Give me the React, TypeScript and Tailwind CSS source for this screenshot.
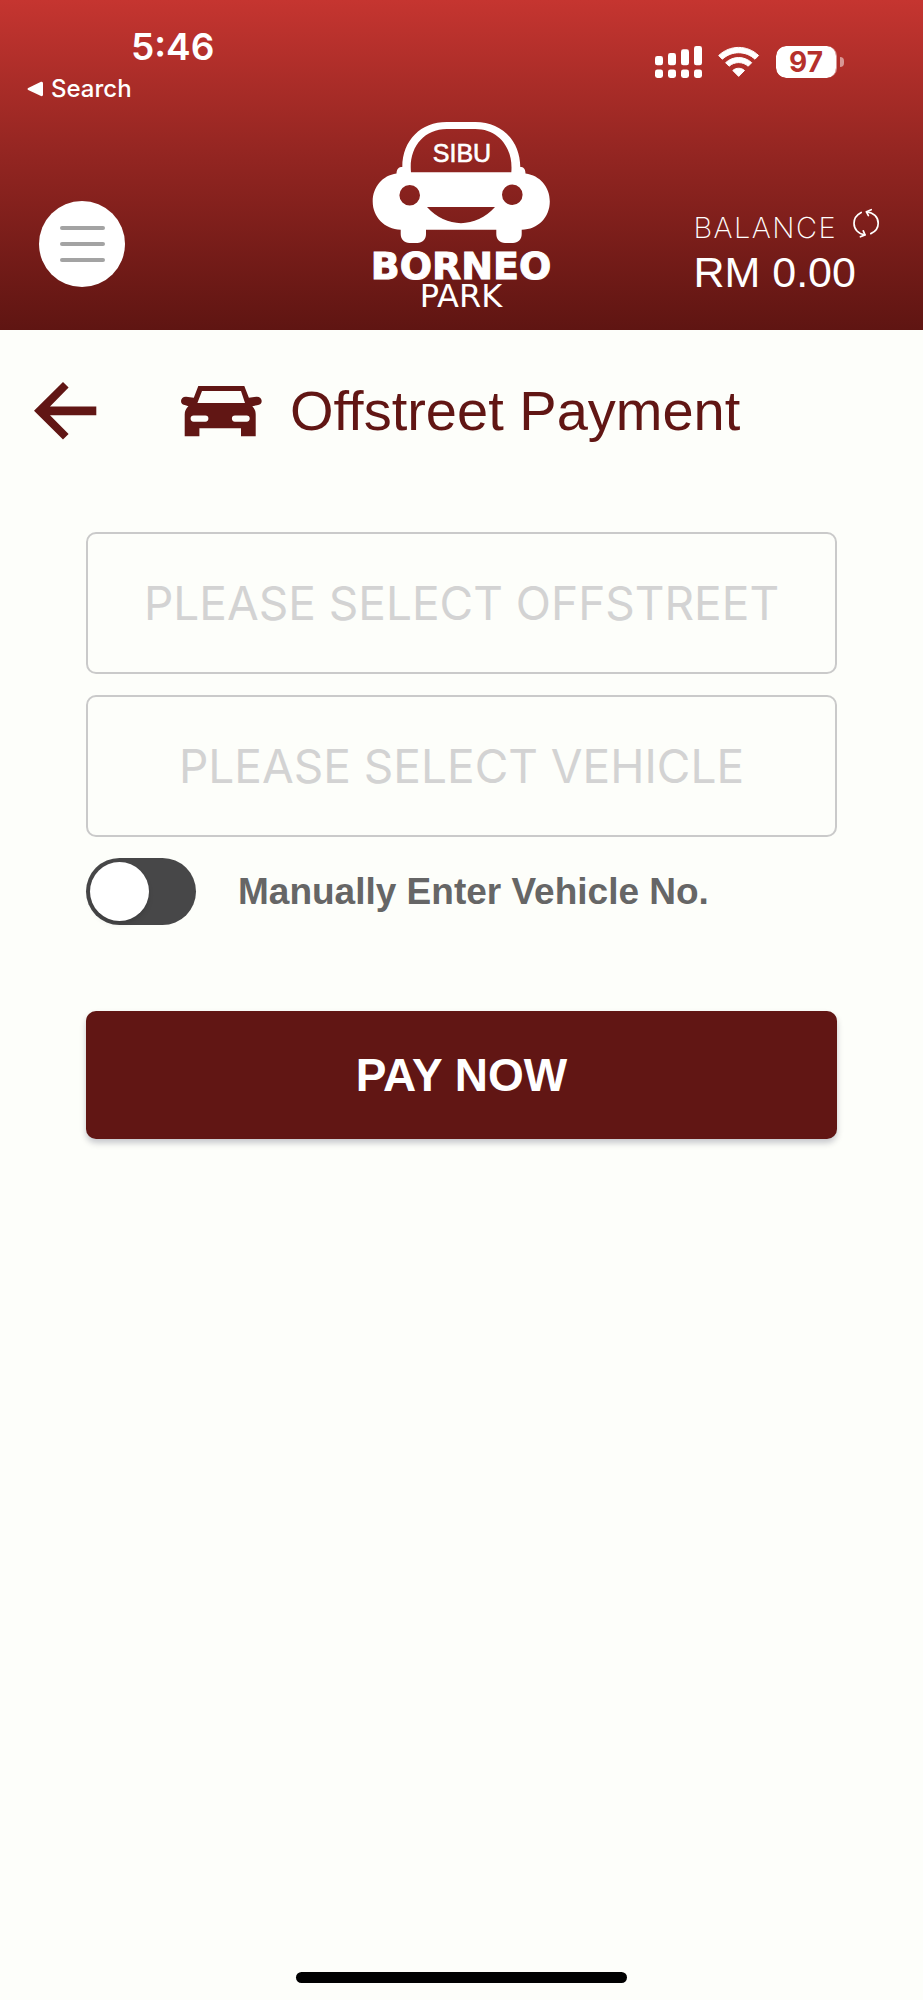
import { useState } from "react";

const OFFSTREETS = ["Sibu Gateway", "Wisma Sanyan"];
const VEHICLES = ["QSA 1234", "QSB 5678"];

function SignalIcon() {
  return (
    <svg viewBox="0 0 47 32" className="h-8 w-[47px]" fill="currentColor" aria-hidden>
      <rect x="0" y="10" width="8" height="9.3" rx="2.4" />
      <rect x="13" y="7" width="8" height="12.3" rx="2.4" />
      <rect x="26" y="3.3" width="8" height="16" rx="2.4" />
      <rect x="39" y="0" width="8" height="19.3" rx="2.4" />
      <rect x="0" y="23.4" width="8" height="8.6" rx="2.4" />
      <rect x="13" y="23.4" width="8" height="8.6" rx="2.4" />
      <rect x="26" y="23.4" width="8" height="8.6" rx="2.4" />
      <rect x="39" y="23.4" width="8" height="8.6" rx="2.4" />
    </svg>
  );
}

function WifiIcon() {
  return (
    <svg
      viewBox="0 -1 42 32"
      className="h-8 w-[42px]"
      fill="currentColor"
      stroke="currentColor"
      strokeWidth="1"
      strokeLinejoin="round"
      aria-hidden
    >
      <path d="M.7 8.5C12-2.3 29.3-2.3 40.6 8.5L37 12.2C27.6 3.6 13.7 3.6 4.3 12.2Z" />
      <path d="M7.6 15.7C15 8.8 26.3 8.8 33.7 15.7L30.2 19.2C24.8 14.4 16.5 14.4 11.1 19.2Z" />
      <path d="M14.8 23.5C18 20.5 23.3 20.5 26.5 23.5L20.7 29.4Z" />
    </svg>
  );
}

function RefreshIcon() {
  return (
    <svg
      viewBox="0 0 30 30"
      className="size-[30px]"
      fill="none"
      stroke="currentColor"
      strokeWidth="1.7"
      strokeLinecap="round"
      strokeLinejoin="round"
      aria-hidden
    >
      <path d="M8.2 4.4C3.6 6.8 1 10.8 1 15.2C1 21.3 5.4 26 11.8 26.8" />
      <path d="M10.3 22.8L12 26.9L7.4 28.8" />
      <path d="M17.8 25.6C22.5 23.6 25.2 19.8 25.2 15.2C25.2 9.2 20.4 4.4 13.6 3.8" />
      <path d="M15.4 7.6L13.4 3.8L18.2 1.7" />
    </svg>
  );
}

function Logo() {
  return (
    <svg viewBox="0 0 185 185" className="size-[185px] overflow-visible" fill="white" role="img" aria-label="Sibu Borneo Park">
      <path
        fillRule="evenodd"
        d="M33.3 45C33.5 18 52 0 77.7 0H106.3C132 0 151 18 151.3 45C154.5 45 156.3 46.5 156.5 51.6C171 53.5 180.8 65 180.8 79.5C180.8 95 169 107.7 152.7 107.7V112C152.7 117.5 149 121 144 121H136C131 121 127.3 117.5 127.3 112V107.7H57V112C57 117.5 53.3 121 48.3 121H40.5C35.5 121 31.7 117.5 31.7 112V107.7C15.5 107.2 3.7 95 3.7 79.5C3.7 65 13.5 53.5 27.5 51.6C27.8 46.5 29.8 45 33.3 45Z
           M42 50.3H142.3C144.5 26 129.5 7 106.3 7H77.7C54.5 7 39.5 26 42 50.3Z
           M30.4 73.3A10.3 10.3 0 1 0 51 73.3A10.3 10.3 0 1 0 30.4 73.3Z
           M133 72.7A10.3 10.3 0 1 0 153.6 72.7A10.3 10.3 0 1 0 133 72.7Z
           M58 85H126C107 106.5 77 106.5 58 85Z"
      />
      <text x="93" y="40" textAnchor="middle" className="font-['Liberation_Sans',sans-serif] text-[25px]" stroke="white" strokeWidth="0.6">
        SIBU
      </text>
      <text x="92" y="157" textAnchor="middle" className="font-['DejaVu_Sans',sans-serif] text-[38px] font-bold" stroke="white" strokeWidth="1">
        BORNEO
      </text>
      <text x="92" y="185" textAnchor="middle" className="font-['DejaVu_Sans',sans-serif] text-[32px]">
        PARK
      </text>
    </svg>
  );
}

function CarIcon() {
  return (
    <svg viewBox="0 0 81 51" className="h-[51px] w-[81px] shrink-0" fill="currentColor" aria-hidden>
      <path
        fillRule="evenodd"
        d="M17.3 0H63.3L67.9 11.8L75.5 10.7C78.5 10.5 80.7 12.5 80.7 15C80.7 17.5 79 19 76 19.2L71.3 20.2C73.5 22.5 74.7 25 74.7 28.5V50.3H60V42.3H18.4V50.3H3.7V28.5C3.7 25 5 22.5 7.4 20.2L4.5 19.2C1.7 19 0 17.5 0 15C0 12.5 2.2 10.5 5.2 10.7L12.8 11.8Z
           M21 5L16.4 17H64L60 5Z
           M12.7 29.5A3.1 3.1 0 0 0 12.7 35.7H24.3A3.1 3.1 0 0 0 24.3 29.5Z
           M54 29.5A3.1 3.1 0 0 0 54 35.7H65.6A3.1 3.1 0 0 0 65.6 29.5Z"
      />
    </svg>
  );
}

function SelectField({ label, options }: { label: string; options: string[] }) {
  const [value, setValue] = useState("");

  return (
    <select
      aria-label={label}
      value={value}
      onChange={(e) => setValue(e.target.value)}
      className="h-[142px] w-full appearance-none rounded-[10px] border-2 border-[#cacaca] bg-transparent text-center font-['Inter',sans-serif] text-[46px] text-[#d3d3d3]"
    >
      <option value="">{label}</option>
      {options.map((option) => (
        <option key={option}>{option}</option>
      ))}
    </select>
  );
}

function Header() {
  return (
    <header className="bg-linear-to-b from-[#c53530] to-[#5f1512] py-[23px] text-white">
      {/* Status bar */}
      <div className="flex items-start justify-between pr-[79px] pl-[27px] font-['Inter',sans-serif]">
        <div>
          <p className="ml-[104px] text-[37px] leading-[48px] font-semibold">5:46</p>
          <a href="#search" className="flex h-9 items-center gap-2 text-[24px] font-medium">
            <svg viewBox="0 0 16 16" className="size-4" fill="currentColor" aria-hidden>
              <path d="M1.2 7L14 .8Q16 .2 16 2.2V13.6Q16 15.6 14 15L1.2 9Q-.2 8 1.2 7Z" />
            </svg>
            Search
          </a>
        </div>
        <div className="mt-[23px] flex items-center gap-4">
          <SignalIcon />
          <WifiIcon />
          <div className="flex items-center gap-[3px]">
            <span className="flex h-8 w-[61px] items-center justify-center rounded-[10px] border-r border-white/50 bg-white bg-clip-padding text-[28px] font-bold text-[#b5302c]">
              97
            </span>
            <span className="h-[10px] w-1 rounded-r-full bg-white/50" />
          </div>
        </div>
      </div>

      {/* Menu, logo, balance */}
      <div className="mt-[15px] grid grid-cols-[1fr_auto_1fr] items-end">
        <button
          type="button"
          aria-label="Menu"
          className="mb-5 ml-[39px] flex size-[86px] flex-col items-center justify-center gap-3 rounded-full bg-white"
        >
          <span className="h-1 w-[45px] rounded-full bg-[#a3a3a3]" />
          <span className="h-1 w-[45px] rounded-full bg-[#a3a3a3]" />
          <span className="h-1 w-[45px] rounded-full bg-[#a3a3a3]" />
        </button>
        <Logo />
        <div className="mb-[11px] justify-self-end pr-10">
          <div className="flex items-start gap-4">
            <span className="font-['Inter',sans-serif] text-[29px] leading-10 font-extralight tracking-wider">
              BALANCE
            </span>
            <button type="button" aria-label="Refresh balance">
              <RefreshIcon />
            </button>
          </div>
          <p className="text-[43px] leading-[48px]">RM 0.00</p>
        </div>
      </div>
    </header>
  );
}

export default function App() {
  const [manual, setManual] = useState(false);

  return (
    <div className="flex min-h-screen flex-col bg-[#fdfefa] font-['Liberation_Sans',Arial,sans-serif]">
      <Header />

      <main>
        <div className="flex items-center pt-[49px] pl-[34px] text-[#611614]">
          <button type="button" aria-label="Back">
            <svg viewBox="0 0 63 58" className="h-[58px] w-[63px]" fill="currentColor" aria-hidden>
              <path d="M29 0L34.6 5.6L16 24.5H62.3V33.2H16L34.6 52L29 57.6L0 28.8Z" />
            </svg>
          </button>
          <h1 className="ml-[84px] flex items-center gap-7 text-[56px] leading-[64px]">
            <CarIcon />
            Offstreet Payment
          </h1>
        </div>

        <form className="mt-[89px] flex flex-col gap-[21px] px-[86px]" onSubmit={(e) => e.preventDefault()}>
          <SelectField label="PLEASE SELECT OFFSTREET" options={OFFSTREETS} />
          <SelectField label="PLEASE SELECT VEHICLE" options={VEHICLES} />

          <div className="flex items-center gap-[42px]">
            <input
              id="manual"
              type="checkbox"
              role="switch"
              checked={manual}
              onChange={(e) => setManual(e.target.checked)}
              className="flex h-[67px] w-[110px] shrink-0 appearance-none items-center rounded-full bg-[#474748] px-1 before:size-[59px] before:rounded-full before:bg-white before:shadow-md before:content-[''] checked:justify-end checked:bg-[#611614]"
            />
            <label htmlFor="manual" className="text-[37px] leading-[48px] font-bold text-[#666666]">
              Manually Enter Vehicle No.
            </label>
          </div>

          <button
            type="submit"
            className="mt-[65px] h-32 rounded-[10px] bg-[#611614] text-[46px] font-bold text-white shadow-[0_4px_6px_rgba(0,0,40,0.22)]"
          >
            PAY NOW
          </button>
        </form>
      </main>

      {/* Home indicator */}
      <div className="mx-auto mt-auto mb-[17px] h-[11px] w-[331px] rounded-full bg-black" />
    </div>
  );
}
